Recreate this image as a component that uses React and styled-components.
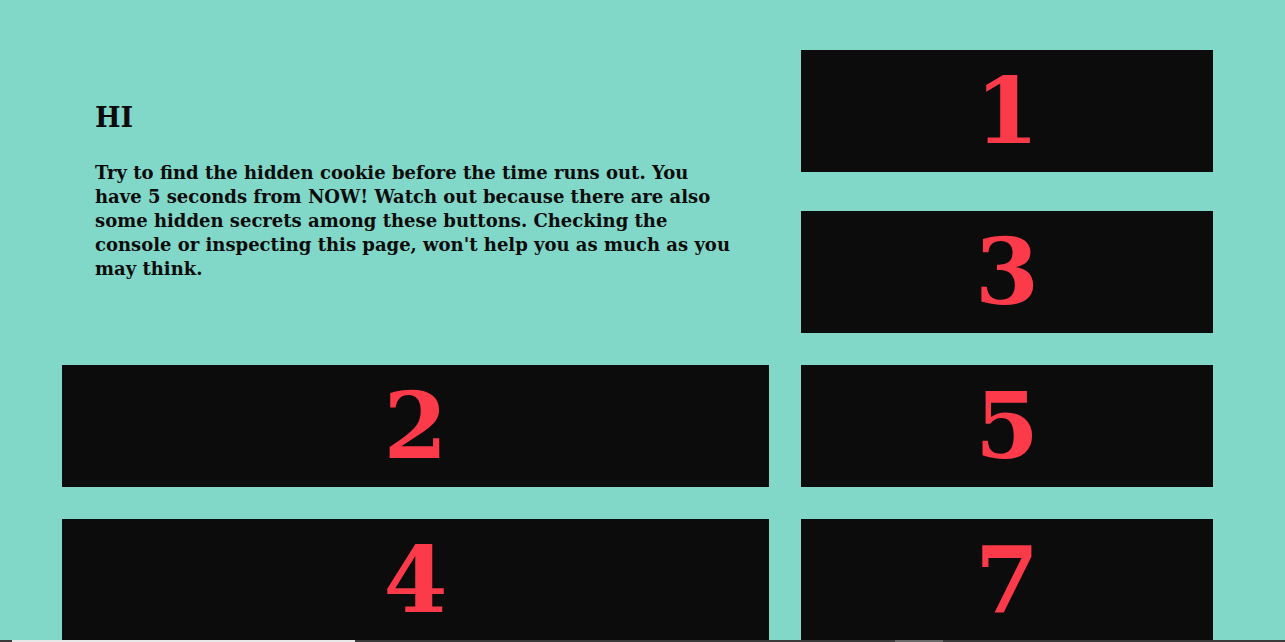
import styled, { createGlobalStyle } from 'styled-components';

const GlobalStyle = createGlobalStyle`
    html, body {
        margin: 0;
        padding: 0;
        background: #81d8c8;
        overflow: hidden;
    }
`;

const Page = styled.div`
    padding: 50px 72px 40px 62px;
    font-family: "DejaVu Serif", "Liberation Serif", serif;
    color: #0c0c0c;
`;

const TopSection = styled.div`
    display: grid;
    grid-template-columns: 707px 412px;
    column-gap: 32px;
`;

const Intro = styled.div`
    padding: 52px 33px 0 33px;
`;

const Title = styled.h2`
    margin: 0 0 28px 0;
    font-size: 27px;
    font-weight: bold;
`;

const Text = styled.p`
    margin: 0;
    max-width: 638px;
    font-size: 18px;
    line-height: 24px;
    font-weight: bold;
`;

const Stack = styled.div`
    display: flex;
    flex-direction: column;
    gap: 39px;
`;

const Grid = styled.div`
    display: grid;
    grid-template-columns: 707px 412px;
    gap: 32px;
    margin-top: 32px;
`;

const NumberButton = styled.button`
    height: 122px;
    border: none;
    margin: 0;
    padding: 0;
    background: #0c0c0c;
    color: #fd3a4a;
    font-family: "DejaVu Serif", "Liberation Serif", serif;
    font-weight: bold;
    font-size: 92px;
    line-height: 1;
    display: flex;
    align-items: center;
    justify-content: center;
    cursor: pointer;
`;

const BottomStrip = styled.div`
    position: fixed;
    left: 0;
    right: 0;
    bottom: 0;
    height: 2px;
    background: #3b3b3b;
`;

const StripThumb = styled.div`
    position: absolute;
    top: 0;
    height: 2px;
    left: ${(p) => p.$left}px;
    width: ${(p) => p.$width}px;
    background: ${(p) => p.$color};
`;

export default function App() {
    return (
        <>
            <GlobalStyle />
            <Page>
                <TopSection>
                    <Intro>
                        <Title>HI</Title>
                        <Text>
                            Try to find the hidden cookie before the time runs out. You have 5 seconds from NOW!
                            Watch out because there are also some hidden secrets among these buttons. Checking the
                            console or inspecting this page, won't help you as much as you may think.
                        </Text>
                    </Intro>
                    <Stack>
                        <NumberButton>1</NumberButton>
                        <NumberButton>3</NumberButton>
                    </Stack>
                </TopSection>
                <Grid>
                    <NumberButton>2</NumberButton>
                    <NumberButton>5</NumberButton>
                    <NumberButton>4</NumberButton>
                    <NumberButton>7</NumberButton>
                </Grid>
            </Page>
            <BottomStrip>
                <StripThumb $left={12} $width={343} $color="#e8e8e8" />
                <StripThumb $left={895} $width={48} $color="#6a6a6a" />
            </BottomStrip>
        </>
    );
}
